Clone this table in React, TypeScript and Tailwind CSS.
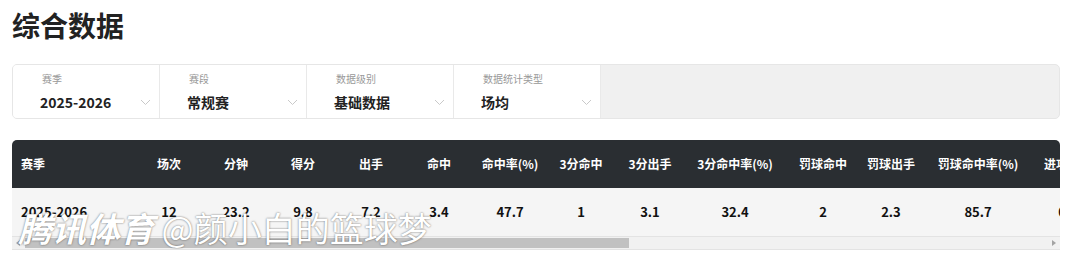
import React from 'react';

interface Filter {
  label: string;
  value: string;
}

const filters: Filter[] = [
  { label: '赛季', value: '2025-2026' },
  { label: '赛段', value: '常规赛' },
  { label: '数据级别', value: '基础数据' },
  { label: '数据统计类型', value: '场均' },
];

// column widths picked so the centres line up with the screenshot
const columns: { title: string; value: string; width: string }[] = [
  { title: '场次', value: '12', width: 'w-[68px]' },
  { title: '分钟', value: '23.2', width: 'w-[66px]' },
  { title: '得分', value: '9.8', width: 'w-[68px]' },
  { title: '出手', value: '7.2', width: 'w-[68px]' },
  { title: '命中', value: '3.4', width: 'w-[68px]' },
  { title: '命中率(%)', value: '47.7', width: 'w-[74px]' },
  { title: '3分命中', value: '1', width: 'w-[68px]' },
  { title: '3分出手', value: '3.1', width: 'w-[70px]' },
  { title: '3分命中率(%)', value: '32.4', width: 'w-[100px]' },
  { title: '罚球命中', value: '2', width: 'w-[76px]' },
  { title: '罚球出手', value: '2.3', width: 'w-[60px]' },
  { title: '罚球命中率(%)', value: '85.7', width: 'w-[114px]' },
  { title: '进攻篮板', value: '0.8', width: 'w-[66px]' },
  { title: '防守篮板', value: '2.1', width: 'w-[68px]' },
];

const Chevron = () => (
  <svg width="11" height="7" viewBox="0 0 11 7" fill="none" className="shrink-0">
    <polyline points="1,1 5.5,5.5 10,1" stroke="#c9c9c9" strokeWidth="1" />
  </svg>
);

const FilterCell = ({ label, value }: Filter) => (
  <div className="w-[147px] shrink-0 bg-white border-r border-[#e9e9e9] pl-[27px] pr-[8px] pt-[7px] pb-[7px]">
    <div className="pl-[2px] text-[10px] leading-[14px] text-[#999]">{label}</div>
    <div className="mt-[6px] flex items-center justify-between">
      <span className="text-[14px] leading-[20px] font-bold text-[#222]">{value}</span>
      <Chevron />
    </div>
  </div>
);

export default function App() {
  return (
    <div
      className="w-[1080px] h-[265px] bg-white overflow-hidden"
      style={{ fontFamily: '"Noto Sans CJK SC", "Noto Sans", sans-serif' }}
    >
      <h1 className="pl-[12px] pt-[6px] text-[28px] leading-[38px] font-bold text-[#222]">综合数据</h1>

      <div className="mx-[12px] mt-[20px] w-[1048px] h-[55px] flex border border-[#e6e6e6] rounded-[5px] bg-[#f0f0f0] overflow-hidden">
        {filters.map((f) => (
          <FilterCell key={f.label} {...f} />
        ))}
      </div>

      <div className="relative mx-[12px] mt-[21px] w-[1048px] rounded-t-[5px] border-b border-[#e3e3e3] overflow-hidden">
        <div className="flex h-[48px] bg-[#2a2e32] text-white text-[12px] font-bold items-center whitespace-nowrap">
          <div className="w-[123px] shrink-0 pl-[9px]">赛季</div>
          {columns.map((c) => (
            <div key={c.title} className={`${c.width} shrink-0 text-center`}>
              {c.title}
            </div>
          ))}
        </div>
        <div className="flex h-[48px] bg-[#f5f5f5] text-[13px] font-bold text-[#111] items-center whitespace-nowrap">
          <div className="w-[123px] shrink-0 pl-[9px]">2025-2026</div>
          {columns.map((c) => (
            <div key={c.title} className={`${c.width} shrink-0 text-center`}>
              {c.value}
            </div>
          ))}
        </div>

        {/* horizontal scrollbar */}
        <div className="flex items-center h-[13px] bg-[#f1f1f1] border-t border-[#e3e3e3]">
          <div className="w-[12px] flex justify-center">
            <div className="w-0 h-0 border-y-[3px] border-y-transparent border-r-[4px] border-r-[#a3a3a3]" />
          </div>
          <div className="flex-1 h-[10px]">
            <div className="ml-[1px] w-[604px] h-full bg-[#c1c1c1]" />
          </div>
          <div className="w-[12px] flex justify-center">
            <div className="w-0 h-0 border-y-[3px] border-y-transparent border-l-[4px] border-l-[#a3a3a3]" />
          </div>
        </div>

        {/* watermark */}
        <div className="absolute left-[6px] top-[66px] text-[34px] leading-[44px] text-white whitespace-nowrap italic [text-shadow:0_0_2px_rgba(0,0,0,0.6)]">
          <span className="font-bold">腾讯体育</span>
          <span className="font-normal not-italic"> @颜小白的篮球梦</span>
        </div>
      </div>
    </div>
  );
}
